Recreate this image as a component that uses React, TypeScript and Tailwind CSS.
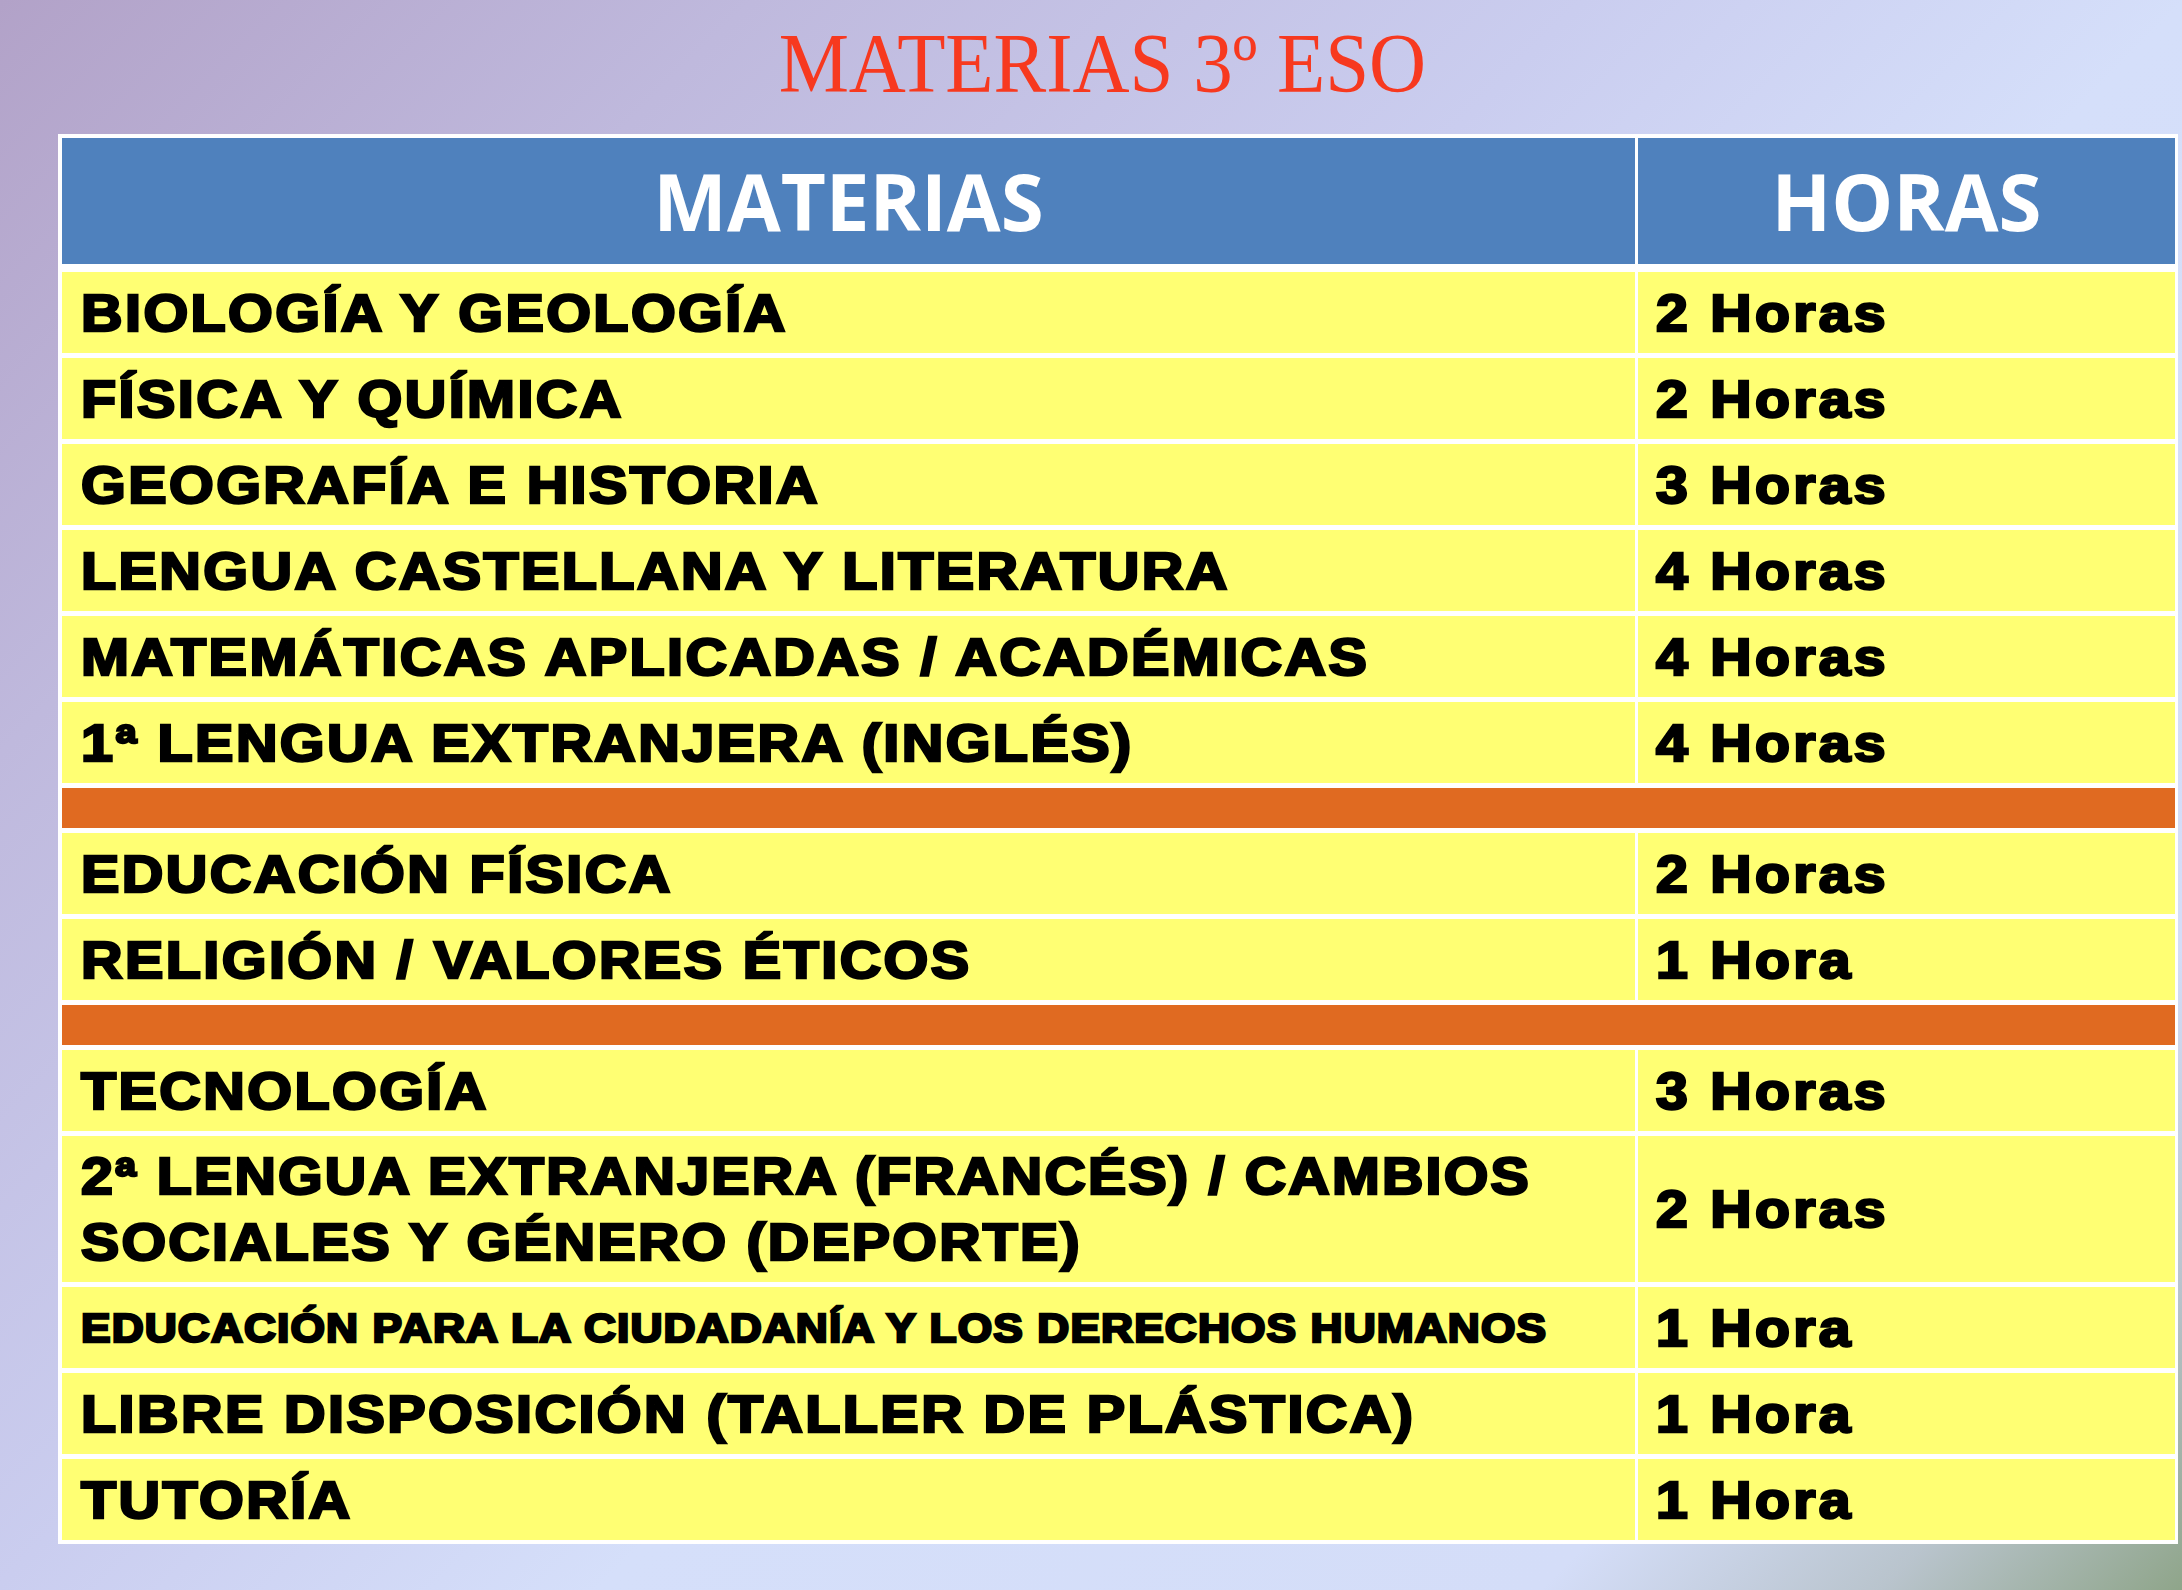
const rows: ({ m: string; h: string; small?: boolean; two?: boolean } | 'sep')[] = [
  { m: 'BIOLOGÍA Y GEOLOGÍA', h: '2 Horas' },
  { m: 'FÍSICA Y QUÍMICA', h: '2 Horas' },
  { m: 'GEOGRAFÍA E HISTORIA', h: '3 Horas' },
  { m: 'LENGUA CASTELLANA Y LITERATURA', h: '4 Horas' },
  { m: 'MATEMÁTICAS APLICADAS / ACADÉMICAS', h: '4 Horas' },
  { m: '1ª LENGUA EXTRANJERA (INGLÉS)', h: '4 Horas' },
  'sep',
  { m: 'EDUCACIÓN FÍSICA', h: '2 Horas' },
  { m: 'RELIGIÓN / VALORES ÉTICOS', h: '1 Hora' },
  'sep',
  { m: 'TECNOLOGÍA', h: '3 Horas' },
  { m: '2ª LENGUA EXTRANJERA (FRANCÉS) / CAMBIOS', h: '2 Horas', two: true },
  { m: 'EDUCACIÓN PARA LA CIUDADANÍA Y LOS DERECHOS HUMANOS', h: '1 Hora', small: true },
  { m: 'LIBRE DISPOSICIÓN (TALLER DE PLÁSTICA)', h: '1 Hora' },
  { m: 'TUTORÍA', h: '1 Hora' },
];

// Arial Black look: bold Liberation Sans, widened and thickened
const cellText =
  "inline-block origin-left font-['Liberation_Sans',Arial,sans-serif] font-bold text-black [-webkit-text-stroke:2.5px_black] whitespace-nowrap";

export default function App() {
  return (
    <div className="w-[2182px] h-[1590px] overflow-hidden bg-[linear-gradient(135deg,#b2a2c8_0%,#bfb9dd_20%,#cacdef_42%,#d5dffa_58%,#d4ddf8_83%,#b9c4cd_92%,#8fa58a_100%)]">
      {/* title */}
      <h1 className="h-[134px] pt-[22px] pl-[22px] text-center">
        <span className="inline-block scale-x-[0.94] font-['Liberation_Serif',serif] text-[84px] leading-[84px] font-normal text-[#f7391f]">
          MATERIAS 3º ESO
        </span>
      </h1>

      <div className="ml-[58px] w-[2120px] bg-white pt-[4px] pb-[4px] pl-[4px] pr-[3px] flex flex-col gap-[5px]">
        {/* header */}
        <div className="grid grid-cols-[1573px_1fr] gap-x-[3px] mb-[3px]">
          <div className="h-[126px] bg-[#4f81bd] flex items-center justify-center">
            <span className="font-['Open_Sans',sans-serif] font-bold text-[78px] leading-none text-white">MATERIAS</span>
          </div>
          <div className="h-[126px] bg-[#4f81bd] flex items-center justify-center">
            <span className="font-['Open_Sans',sans-serif] font-bold text-[78px] leading-none text-white">HORAS</span>
          </div>
        </div>

        {rows.map((r, i) =>
          r === 'sep' ? (
            <div key={i} className="h-[40px] bg-[#e06a21]" />
          ) : (
            <div key={i} className="grid grid-cols-[1573px_1fr] gap-x-[3px]">
              <div className={`bg-[#ffff73] flex items-center pl-[19px] ${r.two ? 'h-[146px]' : 'h-[81px]'}`}>
                {r.two ? (
                  <span className={`${cellText} scale-x-[1.103] text-[52px] leading-[66px] tracking-[2px]`}>
                    {r.m}
                    <br />
                    SOCIALES Y GÉNERO (DEPORTE)
                  </span>
                ) : r.small ? (
                  <span className={`${cellText} scale-x-[1.107] text-[40px] leading-none tracking-[1px]`}>{r.m}</span>
                ) : (
                  <span className={`${cellText} scale-x-[1.106] text-[52px] leading-none tracking-[2.2px]`}>{r.m}</span>
                )}
              </div>
              <div className={`bg-[#ffff73] flex items-center pl-[18px] ${r.two ? 'h-[146px]' : 'h-[81px]'}`}>
                <span className={`${cellText} scale-x-[1.1] text-[52px] leading-none tracking-[3px]`}>{r.h}</span>
              </div>
            </div>
          )
        )}
      </div>
    </div>
  );
}
